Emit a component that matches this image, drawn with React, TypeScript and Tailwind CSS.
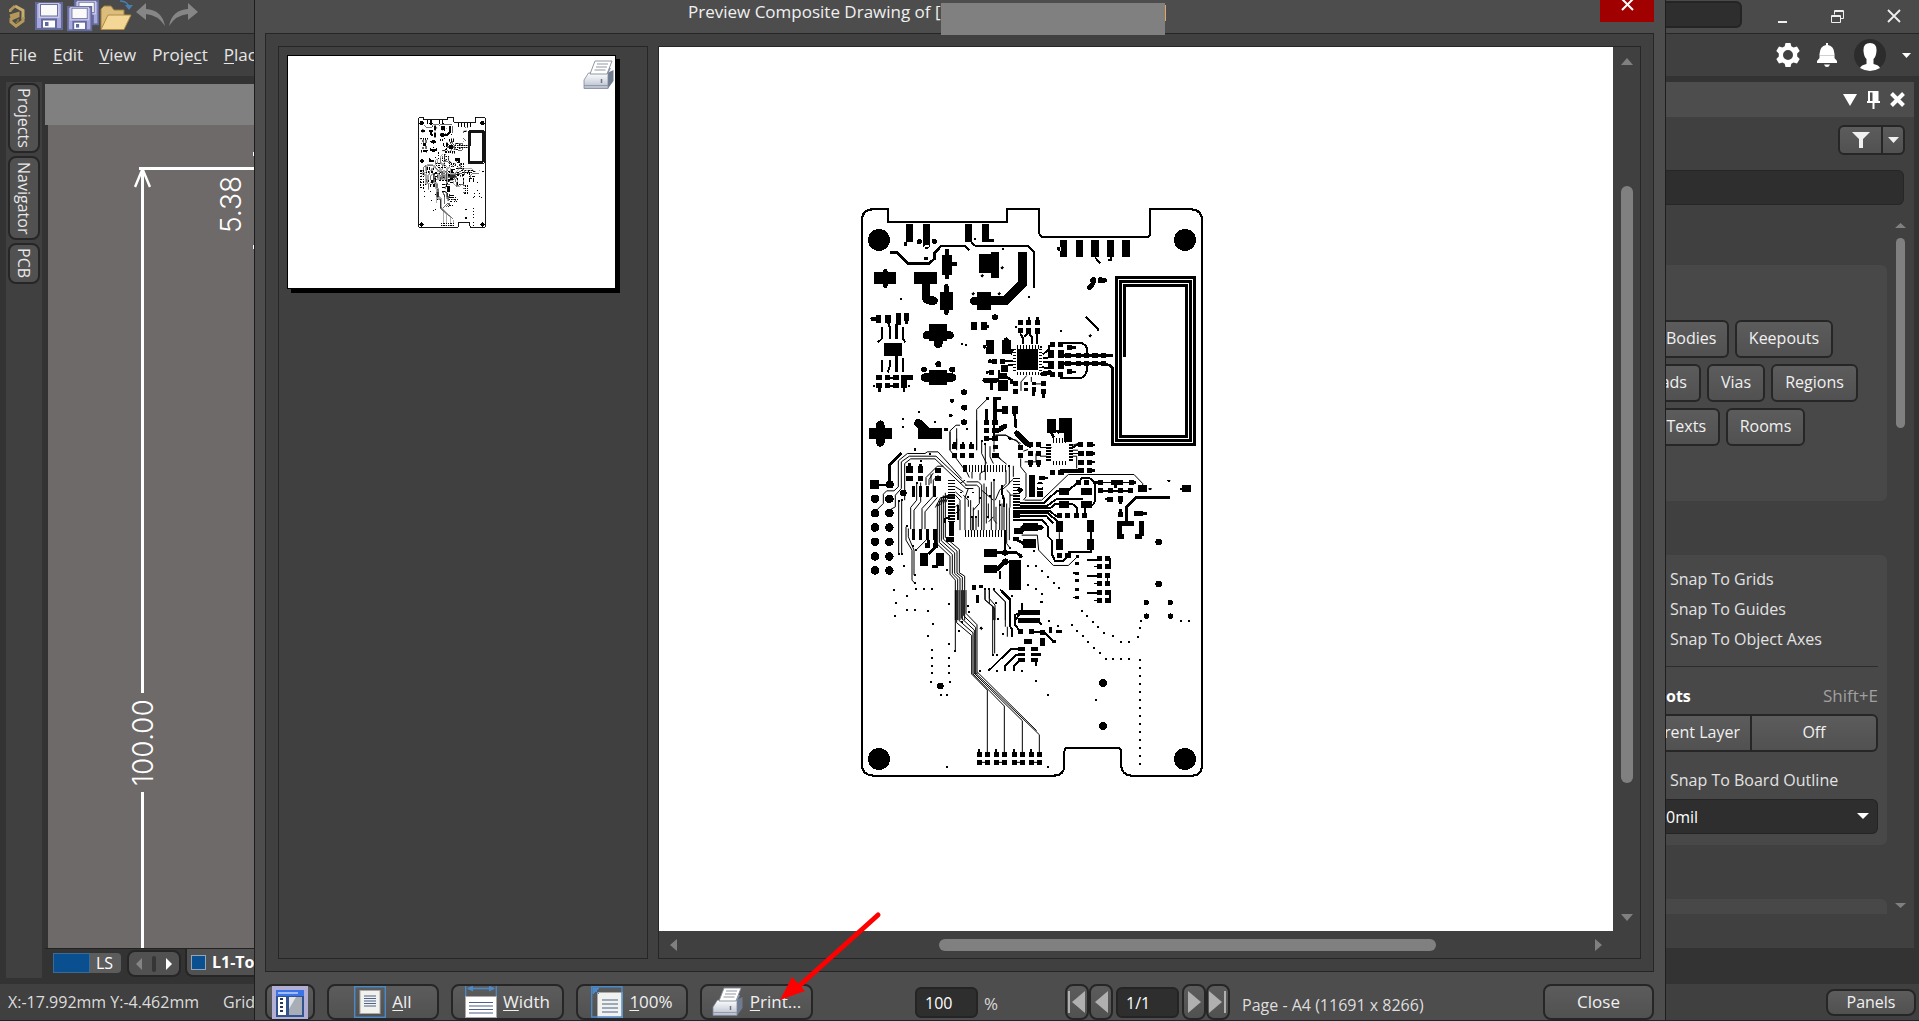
import React from "react";

type Box = [number, number, number, number];
type Dot = [number, number];
type Disc = [number, number, number];

const boxes = (list: Box[]) => list.map(([x, y, w, h]) => `M${x} ${y}h${w}v${h}h${-w}z`).join("");
const squares = (list: Dot[], s: number) => list.map(([x, y]) => `M${x - s / 2} ${y - s / 2}h${s}v${s}h${-s}z`).join("");
const discs = (list: Disc[]) =>
  list.map(([x, y, r]) => `M${x - r} ${y}a${r} ${r} 0 1 0 ${2 * r} 0a${r} ${r} 0 1 0 ${-2 * r} 0z`).join("");

/* Upper third: power section, RF chip and antenna coil */
const topPads: Box[] = [
  [168, 72, 21, 54], [219, 72, 21, 68], [345, 72, 21, 54], [396, 72, 21, 54], [415, 117, 17, 8], [162, 124, 10, 14],
  [630, 120, 21, 51], [678, 120, 21, 51], [723, 120, 24, 51], [771, 120, 21, 51], [816, 120, 24, 51],
  [222, 171, 12, 9], [276, 165, 30, 60], [387, 162, 60, 57], [423, 156, 24, 78], [72, 216, 66, 36], [192, 216, 69, 36],
  [270, 276, 39, 54], [381, 276, 42, 54], [78, 345, 15, 24], [105, 345, 18, 24], [138, 339, 15, 36], [162, 339, 15, 24],
  [102, 429, 54, 39], [78, 525, 18, 15], [105, 525, 15, 15], [118, 529, 14, 6], [129, 525, 18, 15], [153, 525, 36, 15],
  [78, 549, 18, 15], [105, 549, 15, 15], [118, 554, 14, 6], [129, 549, 18, 15], [153, 538, 18, 26],
  [237, 372, 54, 50], [237, 510, 54, 45], [363, 366, 18, 24], [393, 366, 18, 24], [408, 373, 9, 9],
  [504, 360, 15, 15], [529, 360, 15, 15], [555, 360, 15, 15], [504, 384, 15, 15], [528, 384, 15, 18], [555, 384, 15, 18],
  [408, 420, 24, 42], [456, 420, 27, 42], [501, 447, 63, 63],
  [600, 426, 15, 15], [624, 426, 15, 15], [651, 435, 15, 15], [594, 450, 18, 24], [624, 450, 18, 24],
  [594, 483, 18, 24], [624, 483, 18, 24], [600, 516, 15, 15], [624, 516, 15, 15], [651, 507, 15, 15],
  [646, 459, 18, 15], [677, 459, 15, 15], [702, 459, 15, 15], [727, 459, 17, 15], [753, 459, 15, 15],
  [646, 483, 18, 15], [677, 483, 15, 15], [702, 483, 15, 15], [727, 483, 17, 15], [753, 483, 15, 15],
  [453, 495, 21, 21], [444, 519, 28, 18], [426, 476, 14, 14], [450, 475, 14, 15], [417, 509, 14, 14], [444, 540, 30, 33],
  [420, 545, 9, 25], [489, 543, 15, 15], [489, 567, 15, 15], [522, 546, 13, 9], [545, 546, 13, 9], [573, 543, 15, 15],
  [522, 562, 12, 10], [545, 560, 13, 14], [573, 567, 15, 15], [57, 684, 69, 33], [204, 684, 72, 33],
  [591, 657, 27, 42], [627, 654, 39, 45], [642, 695, 24, 30], [407, 591, 10, 9], [456, 618, 18, 24], [486, 618, 18, 24],
  [402, 660, 15, 15], [426, 660, 18, 15], [402, 684, 15, 15], [426, 684, 18, 15], [402, 708, 15, 15], [426, 708, 18, 15],
  [534, 726, 15, 15], [558, 726, 15, 15], [684, 726, 15, 15], [710, 726, 18, 15], [728, 731, 8, 6],
];
const topDiscs: Disc[] = [
  [87, 119, 33], [1005, 119, 33], [208, 124, 8], [253, 123, 8], [230, 140, 7], [628, 146, 7], [435, 351, 9], [265, 492, 9],
  [222, 508, 9], [307, 508, 9], [342, 576, 9], [306, 602, 6], [343, 622, 9], [302, 646, 6], [342, 666, 9], [288, 688, 6],
  [730, 240, 9], [752, 240, 9], [480, 716, 5], [404, 439, 6], [420, 483, 6], [412, 516, 5],
];
const topDots: Dot[] = [
  [459, 147], [374, 117], [154, 296], [537, 291], [633, 392], [337, 431], [348, 434], [207, 635], [158, 657], [158, 681],
  [255, 666], [195, 746], [351, 687], [457, 202], [397, 226], [370, 280], [448, 280], [721, 406], [72, 558], [178, 558], [498, 381],
];

/* Middle third: microcontroller, headers and connector pads */
const rowPads = (xs: number[], ys: number[], w: number, h: number): Box[] =>
  ys.flatMap((y) => xs.map((x): Box => [x, y, w, h]));

const midPads: Box[] = [
  ...rowPads([306, 331, 356], [72, 99], 15, 15), [310, 66, 7, 8], [335, 66, 7, 8], [360, 66, 7, 8], [426, 99, 20, 14], [428, 74, 16, 12],
  ...rowPads([534, 558], [66, 93, 120], 15, 15), [538, 132, 7, 8], [562, 132, 7, 8], [504, 74, 15, 15], [504, 99, 15, 15],
  [684, 66, 15, 15], [711, 66, 15, 15], [684, 93, 18, 15], [708, 93, 22, 15], [684, 118, 18, 15], [711, 118, 15, 15],
  [684, 143, 18, 15], [711, 143, 15, 15], [724, 70, 12, 7], [724, 96, 12, 7], [724, 122, 10, 7], [724, 147, 10, 7],
  [600, 150, 15, 15], [624, 150, 18, 15], [60, 180, 27, 27],
  [168, 138, 21, 21], [174, 127, 9, 12], [204, 138, 15, 21], [208, 130, 7, 10], [168, 168, 21, 15], [204, 168, 15, 15],
  [255, 144, 18, 15], [255, 168, 18, 15], ...rowPads([186, 207, 228, 249], [198], 10, 33), ...rowPads([186, 207, 228, 250], [327], 10, 33),
  [210, 400, 24, 38], [258, 400, 24, 38], [225, 370, 15, 15], [249, 370, 15, 15], [288, 350, 24, 15], [296, 306, 15, 42], [246, 435, 18, 8],
  [537, 165, 18, 66], [561, 190, 18, 18], [561, 213, 18, 18], [567, 166, 18, 14], [583, 169, 11, 7],
  [627, 204, 30, 21], [627, 243, 30, 21], [693, 204, 33, 21], [693, 243, 33, 21], [678, 178, 15, 15], [702, 178, 15, 15],
  [520, 357, 39, 27], [518, 309, 45, 24], [492, 324, 28, 18], [489, 352, 18, 12],
  [618, 303, 21, 33], [711, 300, 21, 36], [618, 357, 21, 33], [711, 357, 21, 33],
  [621, 280, 15, 13], [645, 280, 15, 13], [672, 280, 15, 13], [696, 280, 15, 13], [621, 399, 15, 15], [645, 399, 18, 15],
  [402, 387, 39, 24], [402, 435, 39, 24], [477, 420, 36, 90],
  [744, 180, 15, 15], [783, 180, 36, 15], [792, 190, 10, 13], [836, 180, 15, 15], [736, 183, 10, 8], [850, 183, 9, 8],
  [744, 204, 15, 15], [774, 204, 15, 15], [804, 204, 15, 15], [834, 204, 15, 15], [864, 195, 27, 21], [996, 195, 27, 21], [989, 202, 9, 7],
  [771, 230, 18, 15], [764, 234, 9, 7], [804, 228, 15, 18], [808, 244, 7, 9], [804, 276, 15, 15], [808, 268, 7, 9],
  [852, 273, 28, 16], [878, 277, 14, 8], [801, 303, 50, 15], [801, 303, 15, 54], [801, 342, 21, 15], [868, 303, 14, 45], [856, 342, 20, 15],
  ...rowPads([741, 765], [408, 432, 459, 484, 510, 534], 15, 15), ...rowPads([675], [427, 455, 478, 505, 528], 12, 9),
  [668, 457, 8, 5], [668, 530, 8, 5], [679, 405, 8, 9], [733, 437, 9, 5], [733, 488, 9, 5], [733, 539, 9, 5], [778, 413, 4, 34], [771, 459, 4, 40], [778, 510, 4, 38],
  [366, 495, 12, 14], [387, 495, 12, 10], [378, 526, 8, 24], [504, 570, 66, 15], [402, 24, 15, 15],
];
const midDiscs: Disc[] = [
  ...[236, 279, 322, 365, 409, 451].flatMap((y): Disc[] => [[75, y, 13], [118, y, 13]]),
  [119, 193, 12], [160, 218, 10], [465, 398, 9], [466, 425, 10], [926, 366, 10], [926, 492, 10], [889, 547, 8], [961, 547, 8],
  [889, 588, 8], [961, 588, 8], [512, 408, 6], [570, 195, 9], [510, 210, 8],
];
const midDots: Dot[] = [
  [133, 511], [172, 529], [139, 549], [172, 571], [196, 571], [235, 574], [134, 588], [199, 508], [222, 508], [246, 508],
  [163, 439], [298, 553], [534, 438], [558, 438], [577, 454], [594, 471], [612, 488], [628, 505], [534, 495], [558, 508],
  [575, 523], [575, 547], [696, 573], [712, 589], [291, 450], [900, 206], [956, 181], [552, 392], [240, 102], [195, 88],
  [159, 21], [334, 217], [370, 217], [366, 292], [378, 292], [415, 292], [391, 233], [420, 228], [449, 255], [355, 232],
  [172, 317], [188, 377], [198, 390], [195, 465], [195, 488], [146, 402], [155, 402], [481, 385], [418, 508], [405, 508], [432, 508],
  [146, 242], [157, 240], [395, 62], [406, 72], [478, 137], [432, 178], [212, 123], [200, 188],
];

/* Lower third: programming connector and stitching vias */
const lowPads: Box[] = [
  [504, 60, 66, 15], [504, 84, 66, 15], [504, 117, 15, 15], [537, 117, 15, 15], [569, 119, 16, 15], [570, 144, 14, 24],
  [522, 147, 24, 15], [597, 112, 9, 16], [618, 120, 18, 9], [607, 151, 10, 8], ...rowPads([504, 543], [171, 188, 205], 21, 11), [560, 189, 12, 8],
  ...rowPads([381, 405, 432, 456, 486, 510, 537, 561], [486, 511], 15, 14), [384, 478, 7, 9], [435, 478, 7, 9], [489, 478, 7, 9], [540, 478, 7, 9],
];
const lowDiscs: Disc[] = [[87, 507, 33], [1005, 507, 33], [271, 288, 10], [759, 279, 13], [759, 408, 13]];
const lowDots: Dot[] = [
  [298, 43], [248, 101], [234, 139], [298, 161], [316, 184], [247, 181], [247, 204], [247, 227], [247, 250], [297, 204],
  [297, 227], [297, 250], [243, 275], [300, 275], [273, 315], [291, 315], [291, 531], [594, 531], [594, 315], [558, 272],
  [738, 329], [394, 115], [337, 97], [327, 122], [391, 243], [440, 243], [517, 243], [444, 87], [353, 48], [357, 66],
  [437, 38], [574, 37], [598, 92], [624, 107], [486, 18], [729, 95], [745, 112], [762, 128], [788, 139], [813, 157],
  [838, 157], [864, 141], [869, 115], [873, 92], [993, 92], [1018, 92], [665, 105], [681, 122], [698, 139], [715, 156],
  [732, 173], [750, 190], [767, 207], [788, 207], [813, 207], [837, 207], [429, 194], [440, 194], [460, 131],
  ...[211, 235, 259, 283, 307, 331, 355, 378, 402, 426, 450, 474, 497, 521].map((y): Dot => [869, y]),
];

const ks = [0, 1, 2, 3, 4];

/* `dense` widens the pen so that fine traces survive at thumbnail size */
function Board({ className, dense = false }: { className: string; dense?: boolean }) {
  const fine = dense ? 5 : 3;
  const mid = dense ? 9 : 6;
  return (
    <svg className={className} viewBox="33 23 1026 1708" preserveAspectRatio="none" shapeRendering="crispEdges" fill="none" stroke="#000" aria-label="Board artwork" role="img">
      <path strokeWidth={dense ? 14 : 6} d="M36 60Q36 27 70 27H114V66H472V27H568V96Q568 111 584 111H888Q900 111 900 99V27H1025Q1056 30 1056 60V1695Q1056 1727 1025 1727H845Q813 1725 813 1690V1656Q813 1643 800 1643H656Q643 1643 643 1656V1695Q643 1727 610 1727H70Q36 1725 36 1695Z" />
      <g>
        <path fill="#000" stroke="none" d={boxes(topPads) + discs(topDiscs) + squares(topDots, 6)} />
        <path strokeWidth={fine} d="M380 750V628L412 596M300 750V692L318 675H330M320 684V735M436 705H468L480 716L500 720L512 740M513 572V545L530 526M552 551H575M570 742H605M544 530V545M452 202h10M457 197v10M392 226h10M397 221v10M365 280h10M370 275v10M443 280h10M448 275v10M716 406h10M721 401v10" />
        <path strokeWidth={mid} d="M363 126L378 138H534L552 156V264M735 171L750 189M783 171V180H774M96 381V415L84 426M115 369L119 380V417M160 381V417L166 426M96 480V516M119 480V500L113 516M160 474V516M708 350L743 384V393M639 427H690Q711 432 711 450V466M711 490V508Q708 530 690 534H630M510 399L518 412V432M537 399L545 410V430M561 399V432M522 410L534 398M579 462L597 447V436H605M579 472H594M579 486H594M576 500L594 505M465 483H489M474 493H489M572 436V444M432 600V720M410 715H430M668 742L684 732" />
        <path strokeWidth="8" d="M120 157H141L174 190H236L254 175V158L273 137H345L358 150M140 372V417M139 468V516M447 510V530H470L485 540V548H495M642 466H790M642 490H765L780 496L790 505M410 627V665M436 595V665M430 595H453M442 631H458M494 640L498 684M88 560V574M162 560V574M170 360V372M115 360V372M537 350V365M562 350V365M551 575V586M580 580V594M652 442H677M652 515H677M489 447L482 462M620 690L628 700M603 695L612 712" />
        <path strokeWidth={dense ? 14 : 9} d="M788 502V733H1033V233H800V722H1021V245H812V710H1010V257H823V470" />
        <path strokeWidth="14" strokeLinecap="round" d="M291 152V230M300 191H316M106 213V257M289 258V338M68 356H84M469 418V430M404 540H440M578 521L600 517M446 690L462 680M500 698L540 735M730 240Q730 255 718 262M752 240H764" />
        <path strokeWidth="25" strokeLinecap="round" d="M227 245V285Q227 300 242 301H251M372 302H430M230 405H299M265 412V431M224 532H306M91 673V727M205 669L228 692" />
        <path strokeWidth="28" d="M517 156V250L466 301H420" />
        <path strokeWidth="10" strokeDasharray="4 5" d="M500 440H566M500 519H566M494 446V512M572 446V512" />
        <path strokeWidth="13" strokeDasharray="4 5" d="M609 720H648" />
      </g>
      <g transform="translate(0 660)">
        <path fill="#000" stroke="none" d={boxes(midPads) + discs(midDiscs) + squares(midDots, 6)} />
        <path strokeWidth="13" strokeDasharray="4 5" d="M609 62H655M609 128H655M595 72V122M663 72V122" />
        <path strokeWidth="20" strokeDasharray="4 5" d="M339 145H468M345 340H468M305 178V305M499 172V305" />
        <path strokeWidth={fine} d={ks.map((k) => `M${262 + 6 * k} ${250 - 8 * k}V${372 - 5 * k}L${300 + 7 * k} ${408 - 5 * k}V${462 - 1 * k}L${316 + 7 * k} ${480 - 3 * k}V600`).join("") + ks.map((k) => `M${256 + 8 * k} ${262 - 4 * k}L${272 + 6 * k} ${232 - 2 * k}H315`).join("")} />
        <path strokeWidth={fine} d="M80 270L100 250V222L110 212H132L145 200V122L172 100H225L232 95H264L300 135L335 175M118 270L136 260V225L154 205V125L178 108H258L350 195M164 240V130L182 116H255L348 205H370M146 240V402M155 240V402M182 327V262L200 240V190M192 350V270L212 245V187M216 327V265L250 228V180L265 165M225 327V275L262 232M168 320V360L186 390V480L195 490M175 325V350L192 390V465M198 390L228 360M228 195V172L262 138H280M237 195V178L250 158M243 190V162M300 35V90L345 150M320 55V90M380 0V90M395 60V100L410 130M406 70V180M420 78V110L430 130M445 108L452 118M478 137V190L455 210M440 108L470 132M432 60V95M436 45H468L512 70M512 115V140L528 160V230L520 240M490 137V170" />
        <path strokeWidth={fine} d="M350 185H385L395 195V330M345 195H380L388 202V250L370 270M355 205L345 232V330M362 240V330M370 262V330M378 292V330M340 225L355 240V260M385 270V320M402 190V330M409 200V310M415 250V295M424 185V330M432 178V300L440 310M438 260V330M449 240V330M456 250V330M436 240L449 210L468 190V150M470 250V370L481 385M478 262V360M462 230V330M330 190L345 180M316 200L340 215M316 215L335 232M316 225L330 240V330M316 260L325 252M316 280L330 268M395 210L430 240M416 305L430 290M367 290V330M480 225H500M390 180V160L406 150M350 155L358 172M366 155V175M475 190L489 178M470 210L480 220V262" />
        <path strokeWidth={fine} d="M524 240H575L655 163H852L878 190V200M515 345H562L566 390L610 436H655L682 410M628 336V357M759 187H855M520 93L534 88M524 125H558V100M570 82H590M570 108H590M668 75L684 70M668 90H684M668 100H684M668 108H680V145M745 211H840M510 320L525 330M405 508V540L430 560V600M418 508V535L435 555V600M430 508L466 545V600M895 206H906M951 181H961" />
        <path strokeWidth={mid} d="M87 193H119M510 250H580L620 213H640M655 210L686 186M510 258H590L618 238H700M489 265H600L615 252H640M489 272H600L620 290M489 280H595L622 303M489 288H590L610 310M510 299H575L595 320V350L607 362V405L615 422H640L655 405M560 299H580M690 185Q692 172 702 172H715Q735 180 735 200V240Q733 256 720 256M680 285V262L668 252H655M705 262V285M722 335V357M722 388V397H655M745 211H840M711 419H745M711 469H745M711 520H745M465 330V398M450 508L480 540V600M515 548V575L495 600M455 195V215L462 240V262M325 255V300M285 310V296L300 290" />
        <path strokeWidth="8" d="M119 193V135L154 98M830 310V260L858 232H960M235 402L256 382V350M235 360V375M441 398H500L512 408M450 452V478M346 135V155M305 335V310M498 0V24M495 355L520 370M640 12V25" />
        <path strokeWidth="14" strokeLinecap="round" d="M500 40L532 72M441 447L462 428M520 322H574M636 152H696M455 22L465 17M504 332H515" />
      </g>
      <g transform="translate(0 1170)">
        <path fill="#000" stroke="none" d={boxes(lowPads) + discs(lowDiscs) + squares(lowDots, 6)} />
        <path strokeWidth={fine} d={ks.map((k) => `M${320 + 7 * k} 0V${98 - 7 * k}L${365 + 4 * k} ${136 - 8 * k}V252`).join("")} />
        <path strokeWidth={fine} d="M316 0V184M365 252L412 300V490M369 252L463 348V490M373 250L517 392V490M378 250L568 434V490M382 246L560 422M405 0V28L428 50V194M418 0V40L434 54V190M430 0L466 35V110M472 110V140M395 517H410M446 517H460M500 517H515M550 517H565M389 115H399M394 110V120" />
        <path strokeWidth={mid} d="M455 0L480 28V108L486 118V140M560 88L575 103M545 125H580L612 155M415 243L482 177H510M465 243V228L498 194H510M491 243V228L510 210M558 210V228M515 38V65L495 75V105L512 125" />
      </g>
    </svg>
  );
}

function Printer({ className }: { className: string }) {
  return (
    <svg className={className} viewBox="0 0 32 30" aria-hidden="true">
      <defs>
        <linearGradient id="pr" x1="0" y1="0" x2="0" y2="1"><stop offset="0" stopColor="#fff" /><stop offset="1" stopColor="#b4bcca" /></linearGradient>
      </defs>
      <path d="M24 13L30.500 10V21L25 28.500Z" fill="#6f7c90" />
      <path d="M5.500 13H25V28.500H1V20Z" fill="url(#pr)" stroke="#7d8799" strokeWidth=".8" />
      <path d="M7 13L11 8H28L25 14Z" fill="#8d97a6" />
      <path d="M12 1H29L24 14H7Z" fill="#fff" stroke="#848c98" strokeWidth=".9" />
      <path d="M14 4H25M13 7H24M11.500 10H22.500" stroke="#9198a3" strokeWidth="1" />
      <path d="M1 25.500H25" stroke="#8b95a5" strokeWidth=".9" />
      <path d="M18.500 19V23" stroke="#68758a" strokeWidth="1.500" />
    </svg>
  );
}

function Floppy({ x, y, s }: { x: number; y: number; s: number }) {
  return (
    <g transform={`translate(${x} ${y}) scale(${s})`}>
      <rect x="1" y="1" width="26" height="26" fill="#a9a5dd" stroke="#626a9a" strokeWidth="2" />
      <rect x="4.500" y="2" width="19" height="13" fill="#fff" stroke="#c9c6e8" strokeWidth="2" />
      <rect x="5.500" y="2.500" width="17" height="11.500" fill="#fafafa" stroke="#6b72a0" strokeWidth="1" />
      <rect x="7" y="17.500" width="14" height="9" fill="#fff" stroke="#626a9a" strokeWidth="2" />
      <rect x="10" y="20" width="3.500" height="4" fill="#626a9a" />
    </g>
  );
}

function QuickIcons() {
  const b = "h-8 shrink-0";
  return (
    <div className="flex h-[33px] items-start pl-[9px]">
      <svg className="mr-[10px] mt-1 h-6 w-4 shrink-0" viewBox="0 0 16 24" fill="none" strokeWidth="3" role="img" aria-label="Altium">
        <path d="M6 2L14 6.500V15" stroke="#c9ae6b" />
        <path d="M1 8V6.500L6 2" stroke="#b4985a" />
        <path d="M1 12L9 9.500V12L2 15V18L7 22L14 17V13" stroke="#b4985a" />
        <path d="M9 15V17L7 19" stroke="#8f7740" strokeWidth="1.500" />
      </svg>
      <button aria-label="Save" className={b}><svg className="h-8 w-[30px]" viewBox="0 0 30 32"><Floppy x={0} y={2} s={1} /></svg></button>
      <button aria-label="Save all" className={b}><svg className="h-8 w-[34px]" viewBox="0 0 34 32"><Floppy x={9} y={0} s={0.9} /><Floppy x={2} y={6} s={0.9} /></svg></button>
      <button aria-label="Open" className={b}>
        <svg className="h-8 w-[34px]" viewBox="0 0 34 32">
          <path d="M2 29V9L5 6H12L15 10H25V16Z" fill="#dcbd7c" stroke="#a07f3e" />
          <path d="M2 29.500L9 15H32L25 29.500Z" fill="#f4d696" stroke="#b08c45" />
          <path d="M21 1Q29 1 30 8" fill="none" stroke="#4a7eb0" strokeWidth="1.500" /><path d="M26 5L34 5L30 10Z" fill="#4a7eb0" />
        </svg>
      </button>
      <button aria-label="Undo" className={b}><svg className="h-8 w-[33px]" viewBox="0 0 33 32"><path d="M3 12L13 3V9Q29 10 32 26Q25 15 13 14V20Z" fill="#868686" /></svg></button>
      <button aria-label="Redo" className={b}><svg className="h-8 w-[33px]" viewBox="0 0 33 32"><path d="M32 12L22 3V9Q6 10 3 26Q10 15 22 14V20Z" fill="#868686" /></svg></button>
    </div>
  );
}

function Tri({ dir, className }: { dir: "up" | "down" | "left" | "right"; className: string }) {
  const d = { up: "M0 10L5 0L10 10Z", down: "M0 0L5 10L10 0Z", left: "M10 0L0 5L10 10Z", right: "M0 0L10 5L0 10Z" }[dir];
  return <svg className={className} viewBox="0 0 10 10" preserveAspectRatio="none" fill="currentColor" aria-hidden="true"><path d={d} /></svg>;
}

const face = "border-2 border-[#262626] bg-linear-to-b from-[#5c5c5c] to-[#515151] text-[#f0f0f0]";
const tool = "h-9 rounded-lg " + face;
const key = "underline decoration-1 underline-offset-2";

function Menu({ a, k, z }: { a?: string; k: string; z?: string }) {
  return <button className="shrink-0 whitespace-nowrap">{a}<span className={key}>{k}</span>{z}</button>;
}

const sideTab = "flex w-8 items-center justify-center rounded-lg border-2 border-[#262626] bg-[#515151] [writing-mode:vertical-rl]";

function LeftSide() {
  return (
    <div className="flex w-[254px] shrink-0 flex-col overflow-hidden">
      <div className="border-b border-[#262626] bg-[#4a4a4a]"><QuickIcons /></div>
      <nav className="flex h-[42px] shrink-0 items-center gap-4 bg-[#404040] pl-[10px] text-[17px] text-[#e6e6e6]">
        <Menu k="F" z="ile" /><Menu k="E" z="dit" /><Menu k="V" z="iew" /><Menu a="Proje" k="c" z="t" /><Menu k="P" z="lac" />
      </nav>
      <div className="flex min-h-0 flex-1 pt-[6px]">
        <div className="mb-[6px] ml-[6px] flex w-9 shrink-0 flex-col items-center gap-[3px] bg-[#404040] pt-[1px] text-base text-[#e8e8e8]">
          <button className={sideTab + " h-[70px]"}>Projects</button>
          <button className={sideTab + " h-[84px]"}>Navigator</button>
          <button className={sideTab + " h-[41px]"}>PCB</button>
        </div>
        <div className="flex min-w-0 flex-1 flex-col pl-[3px] pt-[2px]">
          <div className="h-[41px] shrink-0 bg-[#808080]" />
          <div className="relative ml-[3px] min-h-0 flex-1 overflow-hidden bg-[#6e6a69] text-white">
            <div className="absolute bottom-0 left-[93px] top-[43px] flex w-[3px] flex-col items-center">
              <div className="w-[3px] flex-[524] bg-white" />
              <span className="flex h-[99px] w-8 rotate-180 items-center justify-center font-['Inter'] text-[28px] font-light leading-8 [writing-mode:vertical-rl]">100.00</span>
              <div className="w-[3px] flex-[156] bg-white" />
            </div>
            <div className="absolute left-[91px] right-0 top-[42px] h-[3px] bg-white" />
            <svg className="absolute left-[86px] top-[43px] h-[20px] w-[17px]" viewBox="0 0 17 20" fill="none" stroke="#fff" strokeWidth="2.500"><path d="M1 19L8.500 1L16 19" /></svg>
            <span className="absolute left-[167px] top-[44px] flex h-[70px] w-8 rotate-180 items-center justify-center font-['Inter'] text-[28px] font-light leading-8 [writing-mode:vertical-rl]">5.38</span>
            <div className="absolute right-0 top-[27px] h-1 w-px bg-white" />
            <div className="absolute right-0 top-[120px] h-1 w-px bg-white" />
          </div>
          <div className="flex h-9 shrink-0 items-start border-t border-[#222] pl-2 text-white">
            <div className="mt-1 flex h-5 w-[68px] shrink-0 rounded-r-sm bg-[#5c5c5c] text-base leading-[20px]"><span className="mr-[6px] w-[37px] shrink-0 border border-[#3c6a96] bg-[#0a5090]" />LS</div>
            <div className="ml-[6px] mt-px flex h-[27px] w-[54px] shrink-0 items-center justify-between rounded-lg border-2 border-[#262626] bg-[#515151] px-[7px]">
              <button aria-label="Previous layer" className="text-[#858585]"><Tri dir="left" className="h-3 w-[6px]" /></button>
              <span className="h-4 w-1 rounded bg-[#363636]" />
              <button aria-label="Next layer"><Tri dir="right" className="h-3 w-[6px]" /></button>
            </div>
            <button className="ml-1 flex h-7 flex-1 items-center gap-[6px] whitespace-nowrap rounded-bl-lg border-b-2 border-l-2 border-[#262626] bg-[#515151] pl-1 text-base font-bold"><span className="h-[15px] w-[15px] shrink-0 border border-[#8fa6bd] bg-[#0a5090]" />L1-To</button>
          </div>
        </div>
      </div>
      <div className="flex h-9 shrink-0 items-center gap-6 whitespace-nowrap bg-[#404040] pl-2 text-base text-[#dcdcdc]"><span>X:-17.992mm Y:-4.462mm</span><span>Grid</span></div>
    </div>
  );
}

const chip = "flex h-[38px] items-center justify-center rounded-md pb-[2px] " + face;
const cut = "flex h-[38px] items-center rounded-r-md border-l-0 pb-[2px] " + face;

function RightSide() {
  return (
    <div className="flex w-[253px] shrink-0 flex-col text-base text-[#e2e2e2]">
      <div className="flex h-[34px] shrink-0 items-start border-b border-[#262626] bg-[#4a4a4a] text-[#f0f0f0]">
        <input aria-label="Search application" className="mt-px h-[27px] w-[76px] rounded-r-md border-2 border-l-0 border-[#242424] bg-[#2e2e2e]" />
        <button aria-label="Minimize" className="ml-9 mt-2"><svg className="h-4 w-[10px]" viewBox="0 0 10 16"><path d="M0 14H9" stroke="currentColor" strokeWidth="2" /></svg></button>
        <button aria-label="Restore" className="ml-[43px] mt-[10px]"><svg className="h-[14px] w-[14px]" viewBox="0 0 14 14" fill="none" stroke="currentColor"><path d="M3.500 4.500V.500H12.500V8.500H10M.500 5.500H9.500V12.500H.500ZM.500 6.500H9.500M3.500 1.500H12.500" /></svg></button>
        <button aria-label="Close application" className="ml-[42px] mt-[9px]"><svg className="h-[14px] w-[14px]" viewBox="0 0 14 14" stroke="currentColor" strokeWidth="1.800"><path d="M1 1L13 13M13 1L1 13" /></svg></button>
      </div>
      <div className="flex h-[42px] shrink-0 items-center justify-end bg-[#404040] pr-2 text-white">
        <button aria-label="Settings"><svg className="h-6 w-6" viewBox="0 0 24 24" fill="currentColor" fillRule="evenodd"><path d="M9.500 0H14.500L15.300 3.300L17.500 4.500L21 3.500L23.700 8L21.200 10.500V13.500L23.700 16L21 20.500L17.500 19.500L15.300 20.700L14.500 24H9.500L8.700 20.700L6.500 19.500L3 20.500L.300 16L2.800 13.500V10.500L.300 8L3 3.500L6.500 4.500L8.700 3.300ZM12 7A5 5 0 1 0 12 17A5 5 0 1 0 12 7Z" /></svg></button>
        <button aria-label="Notifications" className="ml-4"><svg className="h-6 w-[22px]" viewBox="0 0 22 24" fill="currentColor"><path d="M10 0H12V2Q18 3 18.500 11V15L21 18V20H1V18L3.500 15V11Q4 3 10 2ZM8 21.500H14Q13 24 11 24Q9 24 8 21.500Z" /><path d="M4 12.500H18" stroke="#bbb" strokeWidth=".7" /></svg></button>
        <button aria-label="Account" className="ml-4"><svg className="h-8 w-8" viewBox="0 0 32 32"><circle cx="16" cy="16" r="16" fill="#2c2c2c" /><path d="M16 4Q23 4 22.500 12Q22 18 19.500 20V25Q25 26 26 29Q16 35 6 29Q7 26 12.500 25V20Q10 18 9.500 12Q9 4 16 4Z" fill="#fff" /></svg></button>
        <button aria-label="Account menu" className="ml-4"><Tri dir="down" className="h-[5px] w-[9px]" /></button>
      </div>
      <div className="mr-[5px] mt-[6px] flex min-h-0 flex-1 flex-col bg-[#404040]">
        <div className="flex h-[35px] shrink-0 items-center justify-end gap-[10px] bg-[#4d4d4d] pr-[9px] text-white">
          <button aria-label="Panel menu"><Tri dir="down" className="h-3 w-[14px]" /></button>
          <button aria-label="Pin panel"><svg className="h-[18px] w-[13px]" viewBox="0 0 13 18" fill="currentColor" fillRule="evenodd"><path d="M1 0H11.500V10H13V12H7.500V18H5.500V12H0V10H1ZM3 1.500V10H5.500V1.500Z" /></svg></button>
          <button aria-label="Close panel"><svg className="h-[15px] w-[15px]" viewBox="0 0 15 15" stroke="currentColor" strokeWidth="4"><path d="M1.500 1.500L13.500 13.500M13.500 1.500L1.500 13.500" /></svg></button>
        </div>
        <div className="flex shrink-0 justify-end pr-[9px] pt-2">
          <button aria-label="Filter" className={"flex h-[30px] w-[45px] items-center justify-center rounded-l-md " + face}><svg className="h-4 w-[18px]" viewBox="0 0 18 16" fill="currentColor"><path d="M0 0H18L11 7V16H7V7Z" /></svg></button>
          <button aria-label="Filter options" className={"flex h-[30px] w-[22px] items-center justify-center rounded-r-md border-l-0 " + face}><Tri dir="down" className="h-[6px] w-[11px]" /></button>
        </div>
        <input aria-label="Search properties" className="mr-[10px] mt-[15px] h-[35px] shrink-0 rounded-r-md border border-l-0 border-[#262626] bg-[#2e2e2e]" />
        <div className="mb-[34px] mt-[18px] flex min-h-0 flex-1">
          <div className="flex min-w-0 flex-1 flex-col pt-[42px]">
            <section className="h-[236px] shrink-0 rounded-r-md bg-[#484848] pt-[55px]">
              <div className="flex gap-[6px]">
                <button className={cut + " w-[63px]"}>Bodies</button><button className={chip + " w-[98px]"}>Keepouts</button>
              </div>
              <div className="mt-[6px] flex gap-[6px]">
                <button className={cut + " w-[35px] justify-end pr-3"}>ads</button><button className={chip + " w-[58px]"}>Vias</button><button className={chip + " w-[87px]"}>Regions</button>
              </div>
              <div className="mt-[6px] flex gap-[6px]">
                <button className={cut + " w-[54px] justify-end pr-3"}>Texts</button><button className={chip + " w-[79px]"}>Rooms</button>
              </div>
            </section>
            <section className="mt-[54px] h-[290px] shrink-0 rounded-r-md bg-[#484848] pr-[9px] pt-[9px]">
              <p className="pl-1 leading-[30px]">Snap To Grids</p>
              <p className="pl-1 leading-[30px]">Snap To Guides</p>
              <p className="pl-1 leading-[30px]">Snap To Object Axes</p>
              <div className="mt-3 border-t border-[#2c2c2c]" />
              <div className="mt-[15px] flex h-[28px] items-center justify-between"><b className="text-white">ots</b><span className="text-[17px] text-[#a0a0a0]">Shift+E</span></div>
              <div className="mt-1 flex">
                <button className={"flex h-[38px] w-[86px] items-center justify-end whitespace-nowrap border-l-0 pb-[2px] pr-[10px] " + face}>rent Layer</button>
                <button className={"flex h-[38px] flex-1 items-center justify-center rounded-r-md border-l-0 pb-[2px] " + face}>Off</button>
              </div>
              <p className="mt-[13px] pl-1 leading-[30px]">Snap To Board Outline</p>
              <div className="relative mt-1">
                <select aria-label="Snap distance" className="h-[35px] w-full appearance-none rounded-r-md border border-l-0 border-[#242424] bg-[#2e2e2e] text-white"><option>0mil</option></select>
                <Tri dir="down" className="pointer-events-none absolute right-[9px] top-[14px] h-[6px] w-3 text-white" />
              </div>
            </section>
            <section className="mt-[54px] h-[15px] shrink-0 rounded-tr-md bg-[#484848]" />
          </div>
          <div className="ml-2 mr-[8px] flex w-[11px] flex-col items-center text-[#808080]">
            <Tri dir="up" className="h-[5px] w-[11px] shrink-0" />
            <div className="mt-[10px] h-[190px] w-[9px] rounded-full bg-[#808080]" />
            <Tri dir="down" className="mb-[6px] mt-auto h-[5px] w-[11px] shrink-0" />
          </div>
        </div>
      </div>
      <div className="mt-9 flex h-9 shrink-0 items-center justify-end bg-[#404040] pr-[3px]">
        <button className={"h-[27px] w-[90px] rounded-lg leading-[22px] " + face}>Panels</button>
      </div>
    </div>
  );
}

const sheetLines = "M7 11H23M7 15H23M7 19H23M7 23H23";

function Dialog() {
  return (
    <div role="dialog" aria-label="Preview Composite Drawing" className="absolute inset-y-0 left-[254px] right-[253px] flex flex-col border-x border-[#1e1e1e] bg-[#4d4d4d] pl-[10px] pr-[11px] text-[17px] text-[#f0f0f0]">
      <header className="flex h-[33px] shrink-0 items-start justify-end">
        <h1 className="mr-auto flex pl-[423px] leading-[23px]">
          <span className="whitespace-nowrap">Preview Composite Drawing of [</span>
          <span className="relative mt-[3px] h-8 w-[224px] bg-[#808080]" />
          <span className="mt-[5px] h-4 w-px bg-[#e0a860]" />
        </h1>
        <button aria-label="Close dialog" className="flex h-[22px] w-[54px] justify-center bg-[#a00000]"><svg className="h-[13px] w-[13px]" viewBox="0 0 13 13" stroke="#fff" strokeWidth="2"><path d="M1 -1L12 10M12 -1L1 10" /></svg></button>
      </header>
      <div className="flex min-h-0 flex-1 gap-[10px] border border-[#262626] bg-[#404040] p-3">
        <div className="w-[370px] shrink-0 border border-[#262626] p-2">
          <div className="relative h-[234px] w-[329px] border border-black bg-white shadow-[4px_4px_0_#000]">
            <Board dense className="mx-auto mt-[61px] h-[111px] w-[68px]" />
            <Printer className="absolute right-0 top-1 h-[30px] w-8" />
          </div>
        </div>
        <div className="flex min-w-0 flex-1 border border-[#262626]">
          <div className="flex min-w-0 flex-1 flex-col">
            <div className="min-h-0 flex-1 overflow-hidden bg-white">
              <Board className="ml-[202px] mt-[161px] h-[569px] w-[342px]" />
            </div>
            <div className="flex h-[27px] shrink-0 items-center pl-[11px] pr-[11px] text-[#808080]">
              <Tri dir="left" className="h-3 w-[7px]" />
              <div className="flex flex-1 justify-center px-[100px]"><div className="ml-[102px] h-3 w-[497px] rounded-full bg-[#808080]" /></div>
              <Tri dir="right" className="h-3 w-[7px]" />
            </div>
          </div>
          <div className="flex w-[27px] shrink-0 flex-col items-center pb-[37px] pt-[11px] text-[#808080]">
            <Tri dir="up" className="h-[7px] w-3 shrink-0" />
            <div className="mb-[131px] mt-[121px] w-3 flex-1 rounded-full bg-[#808080]" />
            <Tri dir="down" className="h-[7px] w-3 shrink-0" />
          </div>
        </div>
      </div>
      <footer className="flex h-12 shrink-0 items-start gap-3 pt-3">
        <button aria-label="Toggle thumbnails" className={tool + " flex w-[50px] justify-center"}>
          <svg className="h-[33px] w-9" viewBox="0 0 36 33">
            <rect width="36" height="33" fill="#b3afd4" /><rect x="4" y="4" width="28" height="27" fill="#31538e" /><rect x="4" y="4" width="28" height="6" fill="#3c74e8" /><path d="M6 7H26" stroke="#9ebcff" strokeWidth="2" />
            <rect x="6" y="11" width="8" height="18" fill="#fff" /><path d="M8 13h3M8 17h3M8 21h3M8 25h3" stroke="#26365c" strokeWidth="2" /><rect x="17" y="11" width="13" height="18" fill="#a9adb5" /><path d="M17 11H24L17 23Z" fill="#e2e5ea" />
          </svg>
        </button>
        <button className={tool + " flex w-[112px] items-center justify-center gap-[6px]"}>
          <svg className="h-8 w-8" viewBox="0 0 32 32"><rect x=".7" y=".7" width="30.600" height="30.600" fill="none" stroke="#4a8acb" strokeWidth="1.400" /><rect x="6" y="4.500" width="20" height="23" fill="#f1f1ee" stroke="#aaa" /><path d="M10 10H22M10 12.500H22M10 15H22M10 17.500H22M10 20H22" stroke="#4d618a" strokeWidth="1.200" /></svg>
          <span><span className={key}>A</span>ll</span>
        </button>
        <button className={tool + " flex w-[113px] items-center justify-center gap-[6px]"}>
          <svg className="h-8 w-8" viewBox="0 0 32 32"><rect x=".5" y="10.500" width="31" height="21" fill="#fff" stroke="#aaa" /><path d="M4 16.500H28M4 20H28M4 23.500H28M4 27H28" stroke="#4d618a" strokeWidth="1.200" /><path d="M.7 0V10M31.300 0V10M3 2.500H29" stroke="#4a8acb" strokeWidth="1.300" /><path d="M2 2.500L8 -.500V5.500ZM30 2.500L24 -.500V5.500Z" fill="#4a8acb" /></svg>
          <span><span className={key}>W</span>idth</span>
        </button>
        <button className={tool + " flex w-[112px] items-center justify-center gap-[6px]"}>
          <svg className="h-8 w-8" viewBox="0 0 32 32"><rect x="6.500" y="6.500" width="25" height="25" fill="#f1f1ee" stroke="#aaa" /><path transform="translate(4 3)" d={sheetLines} stroke="#4d618a" strokeWidth="1.200" /><path d="M.7 .7H31V31H.7Z" fill="none" stroke="#4a8acb" strokeWidth="1.400" /><path d="M2 2H8L2 8ZM3 3L8 8" fill="#4a8acb" stroke="#4a8acb" /></svg>
          <span><span className={key}>1</span>00%</span>
        </button>
        <div className="relative">
          <button className={tool + " flex w-[113px] items-center justify-center gap-[6px]"}>
            <Printer className="h-[30px] w-8" />
            <span><span className={key}>P</span>rint...</span>
          </button>
          <svg className="pointer-events-none absolute bottom-4 left-[78px] h-24 w-[106px]" viewBox="0 0 106 96" aria-hidden="true"><path d="M100 7L20 79" stroke="#f00" strokeWidth="5" strokeLinecap="round" /><path d="M2 92L14 69L27 83Z" fill="#f00" /></svg>
        </div>
        <div className="ml-[90px] flex items-center gap-[6px] pt-[3px]">
          <input id="zoom" aria-label="Zoom" defaultValue="100" className="h-[31px] w-[63px] rounded-md border-2 border-[#242424] bg-[#2e2e2e] pl-2 text-base text-white" />
          <label htmlFor="zoom" className="pt-[3px] text-[#d8d8d8]">%</label>
        </div>
        <div className="ml-[55px] flex text-[#b0b0b0]">
          <button aria-label="First page" className={tool + " flex w-6 items-center gap-[2px] pl-px"}><span className="h-[22px] w-[2px] shrink-0 bg-[#b0b0b0]" /><Tri dir="left" className="h-[22px] w-[13px] shrink-0 text-[#b0b0b0]" /></button>
          <button aria-label="Previous page" className={tool + " flex w-6 items-center justify-center"}><Tri dir="left" className="h-[22px] w-[13px] text-[#b0b0b0]" /></button>
          <input aria-label="Page number" defaultValue="1/1" className="mx-[3px] mt-[3px] h-[31px] w-[63px] rounded-md border-2 border-[#242424] bg-[#2e2e2e] pl-2 text-base text-white" />
          <button aria-label="Next page" className={tool + " flex w-6 items-center justify-center"}><Tri dir="right" className="h-[22px] w-[13px] text-[#b0b0b0]" /></button>
          <button aria-label="Last page" className={tool + " flex w-6 items-center gap-[2px] pl-px"}><Tri dir="right" className="h-[22px] w-[13px] shrink-0 text-[#b0b0b0]" /><span className="h-[22px] w-[2px] shrink-0 bg-[#b0b0b0]" /></button>
        </div>
        <p className="whitespace-nowrap pt-[9px] text-base text-[#dedede]">Page - A4 (11691 x 8266)</p>
        <button className={tool + " ml-auto w-[111px]"}>Close</button>
      </footer>
    </div>
  );
}

export default function App() {
  return (
    <div className="relative flex h-screen justify-between overflow-hidden border-b border-[#16272d] bg-[#333333] font-['Open_Sans','Noto_Sans',sans-serif]">
      <LeftSide />
      <RightSide />
      <Dialog />
    </div>
  );
}
